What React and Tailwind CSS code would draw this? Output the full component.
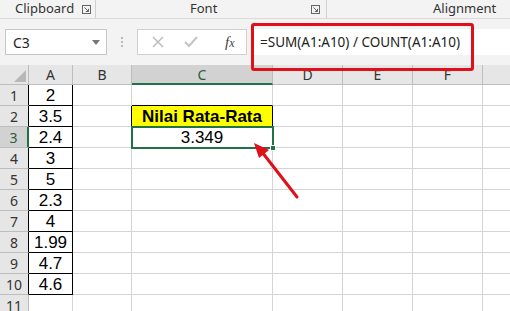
import React from "react"

const cols = [
  { key: "A", w: 44 },
  { key: "B", w: 59 },
  { key: "C", w: 141 },
  { key: "D", w: 70 },
  { key: "E", w: 70 },
  { key: "F", w: 70 },
  { key: "G", w: 70, hidden: true },
]

const values = ["2", "3.5", "2.4", "3", "5", "2.3", "4", "1.99", "4.7", "4.6"]

const uiFont = { fontFamily: '"Noto Sans", "Open Sans", sans-serif' }
const cellFont = { fontFamily: '"Liberation Sans", Arial, sans-serif' }

function LaunchIcon() {
  return (
    <svg width="9" height="9" viewBox="0 0 9 9" className="text-[#666]">
      <rect x="0.5" y="0.5" width="8" height="8" fill="none" stroke="currentColor" strokeWidth="1" />
      <path d="M2.5 2.5 L6.5 6.5 M6.5 3.8 V6.5 H3.8" fill="none" stroke="currentColor" strokeWidth="1" />
    </svg>
  )
}

function Cell({ row, col }) {
  // default gridline
  let cls = "border-r border-b border-[#d4d4d4]"
  let content = null
  if (col === "A" && row <= 10) {
    cls = "border-r border-b border-black"
    content = values[row - 1]
  }
  if (col === "B" && row === 2) cls = "border-r border-b border-r-black border-b-[#d4d4d4]"
  if (col === "C" && row === 1) cls = "border-r border-b border-r-[#d4d4d4] border-b-black"
  if (col === "C" && row === 2) {
    cls = "border-r border-b border-black bg-[#ffff00] font-bold"
    content = "Nilai Rata-Rata"
  }
  if (col === "C" && row === 3) content = "3.349"
  return (
    <div
      className={`h-[21px] flex items-center justify-center text-[17px] text-black leading-none overflow-hidden whitespace-nowrap ${cls}`}
      style={cellFont}
    >
      {content}
    </div>
  )
}

export default function App() {
  const rows = Array.from({ length: 11 }, (_, i) => i + 1)
  return (
    <div className="w-[510px] h-[311px] overflow-hidden bg-white relative select-none" style={uiFont}>
      {/* ribbon group labels */}
      <div className="h-[19px] bg-[#f3f3f3] border-b border-[#dadada] flex items-center text-[13px] text-[#333]">
        <div className="w-[96px] h-full flex items-center border-r border-[#d0d0d0] pl-[15px] pr-[4px] justify-between">
          <span>Clipboard</span>
          <LaunchIcon />
        </div>
        <div className="w-[231px] h-full flex items-center border-r border-[#d0d0d0] pr-[6px] justify-between">
          <span className="ml-[94px]">Font</span>
          <LaunchIcon />
        </div>
        <div className="flex-1 pl-[106px]">Alignment</div>
      </div>

      {/* formula bar */}
      <div className="h-[46px] bg-[#f3f3f3] flex items-start pt-[10px] pl-[5px]">
        <div className="w-[102px] h-[26px] bg-white border border-[#c6c6c6] flex items-center justify-between pl-[7px] pr-[6px] text-[14px] text-[#222]">
          <span>C3</span>
          <svg width="8" height="5" viewBox="0 0 8 5">
            <path d="M0 0 H8 L4 5 Z" fill="#777" />
          </svg>
        </div>
        <div className="w-[30px] h-[26px] flex flex-col items-center justify-center gap-[2px]">
          <span className="w-[2px] h-[2px] bg-[#bbb]" />
          <span className="w-[2px] h-[2px] bg-[#bbb]" />
          <span className="w-[2px] h-[2px] bg-[#bbb]" />
        </div>
        <div className="w-[110px] h-[26px] bg-white border border-[#d0d0d0] flex items-center">
          <svg width="12" height="12" viewBox="0 0 12 12" className="ml-[14px]">
            <path d="M1 1 L11 11 M11 1 L1 11" stroke="#bdbdbd" strokeWidth="1.5" />
          </svg>
          <svg width="14" height="12" viewBox="0 0 14 12" className="ml-[20px]">
            <path d="M1 6 L5 10 L13 1" stroke="#c4c4c4" strokeWidth="2" fill="none" />
          </svg>
          <span
            className="ml-[27px] text-[15px] italic text-[#444]"
            style={{ fontFamily: '"Liberation Serif", "DejaVu Serif", serif' }}
          >
            f<span className="text-[12px]">x</span>
          </span>
        </div>
        <div className="flex-1 h-[26px] bg-white ml-[4px] flex items-center pl-[9px] text-[13.5px] text-[#222] whitespace-nowrap">
          =SUM(A1:A10) / COUNT(A1:A10)
        </div>
      </div>

      {/* sheet */}
      <div
        className="grid"
        style={{ gridTemplateColumns: `29px ${cols.map((c) => c.w + "px").join(" ")}` }}
      >
        {/* header row */}
        <div className="h-[20px] bg-[#e6e6e6] border-r border-b border-[#bdbdbd] flex items-end justify-end p-[2px]">
          <svg width="12" height="12" viewBox="0 0 12 12">
            <path d="M12 0 V12 H0 Z" fill="#b8b8b8" />
          </svg>
        </div>
        {cols.map((c) => (
          <div
            key={c.key}
            className={`h-[20px] flex items-center justify-center text-[14px] border-r ${
              c.key === "C"
                ? "bg-[#d2d2d2] text-[#2a5e3f] border-r-[#bdbdbd] border-b-2 border-b-[#217346]"
                : "bg-[#e6e6e6] text-[#333] border-[#bdbdbd] border-b"
            }`}
          >
            {c.hidden ? null : c.key}
          </div>
        ))}

        {rows.map((r) => (
          <React.Fragment key={r}>
            <div
              className={`h-[21px] flex items-center justify-center text-[14px] border-b ${
                r === 3
                  ? "bg-[#d2d2d2] text-[#2a5e3f] border-b-[#bdbdbd] border-r-2 border-r-[#217346]"
                  : `bg-[#e6e6e6] text-[#333] border-r border-b-[#bdbdbd] ${
                      r <= 10 ? "border-r-black" : "border-r-[#bdbdbd]"
                    }`
              }`}
            >
              {r}
            </div>
            {cols.map((c) => (
              <Cell key={c.key} row={r} col={c.key} />
            ))}
          </React.Fragment>
        ))}
      </div>

      {/* active cell selection C3 */}
      <div className="absolute left-[131px] top-[126px] w-[143px] h-[23px] border-2 border-[#217346] pointer-events-none">
        <div className="absolute right-[-4px] bottom-[-4px] w-[6px] h-[6px] bg-[#217346] border border-white" />
      </div>

      {/* red highlight around formula */}
      <div className="absolute left-[251px] top-[23px] w-[223px] h-[48px] border-[3px] border-[#e0101a] rounded-[3px] pointer-events-none" />

      {/* red arrow */}
      <svg className="absolute left-0 top-0 pointer-events-none" width="510" height="311">
        <path d="M297 197 L262 152" stroke="#e0101a" strokeWidth="3" strokeLinecap="round" />
        <path d="M254 143 L269 150 L259 158 Z" fill="#e0101a" />
      </svg>
    </div>
  )
}
